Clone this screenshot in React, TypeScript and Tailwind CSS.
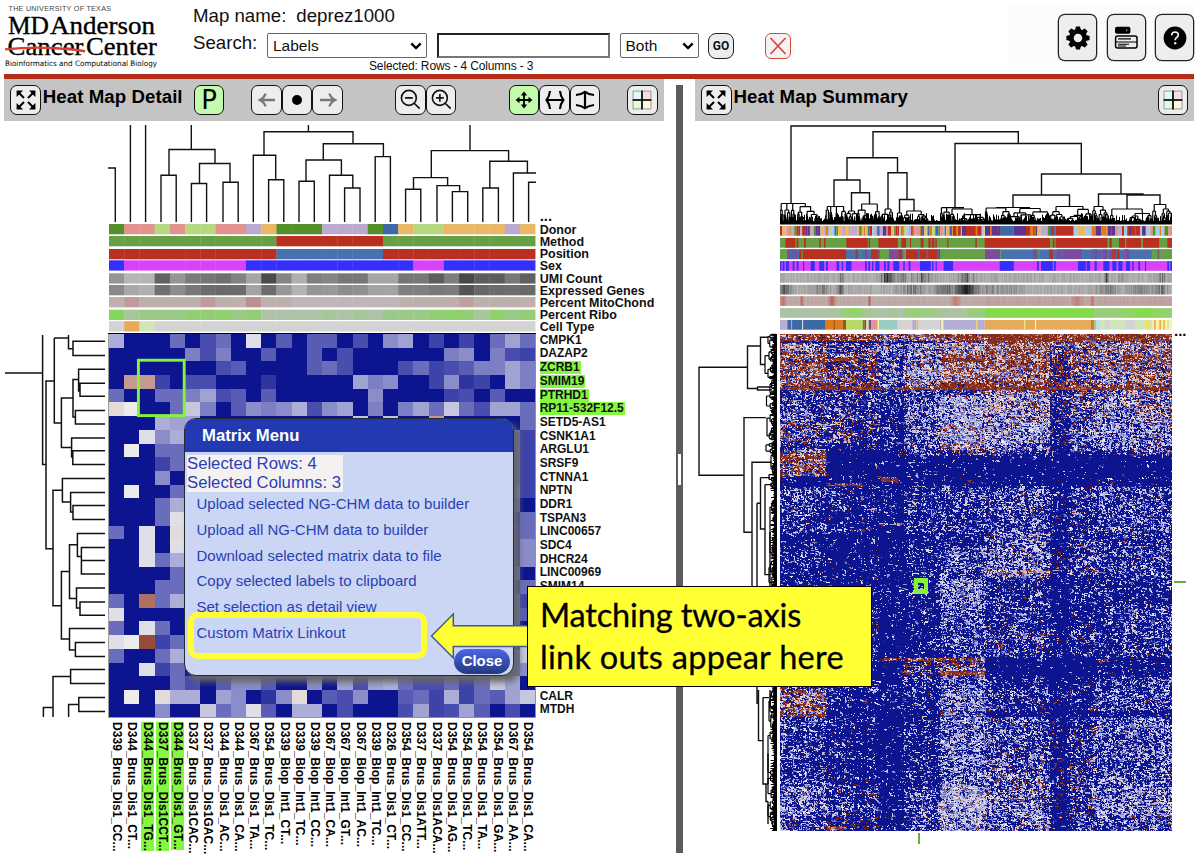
import { useLayoutEffect, useRef } from "react";
import type { ReactNode } from "react";

type Segment = [number, number, string];
type Range = [number, number];

function makeRandom(seed: number) {
  let s = seed;
  return () => {
    s = (s + 0x6d2b79f5) | 0;
    let t = Math.imul(s ^ (s >>> 15), 1 | s);
    t = (t + Math.imul(t ^ (t >>> 7), 61 | t)) ^ t;
    return ((t ^ (t >>> 14)) >>> 0) / 4294967296;
  };
}

/* ---------- detail data ---------- */

const CELL = 15.22;
const ROW = 13.69;

const PALETTE: Record<string, string> = {
  "0": "#0c148f", "1": "#2e35a0", "2": "#3d43a8", "3": "#494eae", "4": "#585cb4",
  "5": "#6a6dbc", "6": "#7c7fc3", "7": "#8a8dca", "8": "#a0a2d2", "9": "#acaed8",
  A: "#c6c6de", B: "#dfdfe8", C: "#ececec", D: "#c39990", E: "#e4dada", F: "#ac7162", G: "#974b3b",
};

const HEAT_ROWS = [
  "900050350B040440307802020585",
  "0000063600400403000000670632",
  "0000000340000453000352346686",
  "0DD2033000100000867002712086",
  "5005568340400000070000230400",
  "EC005A6047679378060685A53885",
  "0009880000000000A0A00D000005",
  "00B7900000000000000000000052",
  "0C05500000000000000000000052",
  "0002500000000000000000000052",
  "0007000000000000000000000052",
  "0C00500000000000000000000062",
  "0005900000000000000000000050",
  "0005B00000000000000000000025",
  "50B0E00000000000000000000035",
  "00B0B00000000000000000000037",
  "00B5900000000000000000000037",
  "0000500000000000000000000050",
  "0005500000000000000000000035",
  "50F5900000000000000000000052",
  "B000000000000000000000000054",
  "50B5000000000000000000000050",
  "BCG250000000000000000000003A",
  "500590000000000000000000005A",
  "00B2500000000000000000000057",
  "0000530477400708389533525A80",
  "0C0E99087017E04370045292548A",
  "000700A57B409903000382384030",
];

const ROW_LABELS = [
  "CMPK1", "DAZAP2", "ZCRB1", "SMIM19", "PTRHD1", "RP11-532F12.5", "SETD5-AS1", "CSNK1A1", "ARGLU1",
  "SRSF9", "CTNNA1", "NPTN", "DDR1", "TSPAN3", "LINC00657", "SDC4", "DHCR24", "LINC00969", "SMIM14",
  "", "", "", "", "", "", "NR4A1", "CALR", "MTDH",
];

const COL_LABELS = [
  "D339_Brus_Dis1_CC...", "D344_Brus_Dis1_CT...", "D344_Brus_Dis1_TG...", "D337_Brus_Dis1CCT...",
  "D344_Brus_Dis1_GT...", "D337_Brus_Dis1CAC...", "D337_Brus_Dis1GAC...", "D344_Brus_Dis1_AC...",
  "D344_Brus_Dis1_CA...", "D367_Brus_Dis1_TA...", "D354_Brus_Dis1_TC...", "D339_Biop_Int1_CT...",
  "D339_Biop_Int1_TC...", "D339_Biop_Int1_CC...", "D367_Biop_Int1_CA...", "D367_Biop_Int1_GT...",
  "D367_Biop_Int1_AC...", "D339_Biop_Int1_TC...", "D326_Brus_Dis1_CT...", "D354_Brus_Dis1_CC...",
  "D337_Brus_Dis1ATT...", "D337_Brus_Dis1ACA...", "D354_Brus_Dis1_AG...", "D354_Brus_Dis1_TC...",
  "D354_Brus_Dis1_TA...", "D354_Brus_Dis1_GA...", "D367_Brus_Dis1_AA...", "D354_Brus_Dis1_CA...",
];

const COVARIATE_NAMES = [
  "Donor", "Method", "Position", "Sex", "UMI Count", "Expressed Genes", "Percent MitoChond", "Percent Ribo", "Cell Type",
];
const BAR_TOPS = [224, 236, 249, 260.3, 273.3, 285, 297, 309.7, 321.2];

const DONOR: Record<string, string> = {
  G: "#55902a", P: "#e0938f", L: "#b6d880", V: "#bbaacf", O: "#e9b768", B: "#3f68a7",
};
const COLORS: Record<string, string> = { g: "#679f44", r: "#b93020", b: "#4a70ae", m: "#d942fb", u: "#342ffb" };

const hex2gray = (s: string) => s.split(" ").map((v) => "#" + v + v + v);

const DETAIL_BARS: string[][] = [
  "GPPLPLLPPVOGGGVVVGBOLLOOOOVO".split("").map((c) => DONOR[c]),
  "gggggggggggrrrrrrrgggggggggg".split("").map((c) => COLORS[c]),
  "rrrrrrrrrrrbbbbbbbrrrrrrrrrr".split("").map((c) => COLORS[c]),
  "ummmmmmmmuuuuuuuuuuummuuuuuu".split("").map((c) => COLORS[c]),
  hex2gray("95 b5 b5 62 95 7a 76 6f 82 a5 4a 85 b0 80 85 77 77 a5 a5 75 77 5d 7d 48 5c 5c 78 60"),
  hex2gray("8a a8 b0 70 8c 78 6c 6a 6c a3 6d 97 b3 95 98 8c 90 a3 a3 7f 7f 78 7c 54 67 6c 6e 6a"),
  "1300003015102222222100040001".split("").map((c) => ["#bdafae", "#bfb0af", "#bdb8b7", "#bf9c99", "#bfa09d", "#bb908d"][+c]),
  "5122233423000010102223431423".split("").map((c) => ["#aec2a8", "#a6c79a", "#9bca88", "#94cd74", "#8fd06c", "#84d65c"][+c]),
  "012".padEnd(28, "0").split("").map((c) => ["#d3d3d3", "#e6ab5a", "#cfe6bd"][+c]),
];

const COL_TREE =
  "M108 168H115.3V222M130.4 125V222M145.6 125V222M191.3 125V149.5M169 175.3V149.5H215V163.5M161 222V175.3H176.2V222M199.5 183.5V163.5H230V182.3M191.4 222V183.5H206.6V222M223 222V182.3H238.2V222" +
  "M308.4 125V131.7M264 155.3V131.7H353V143.7M253.3 222V155.3H275.7V179.7M268.6 222V179.7H283.8V222M323.3 160V143.7H383.4V156.6M306 181.3V160H341.4V175.3M299 222V181.3H314.3V222M329.5 222V175.3H352.8V188M344.6 222V188H360V222M375.2 222V156.6H390.4V222" +
  "M470 125V150.6M431.3 177.6V150.6H508.6V161.3M413.5 189.2V177.6H447.6V185.6M405.6 222V189.2H420.8V222M437 222V185.6H459.6V191.6M452.4 222V191.6H467.7V222M489.8 188V161.3H527.4V173M482.8 222V188H498.4V222M513.4 222V173H536M528.6 222V182.3H536";

const ROW_TREE =
  "M5 373H42.6M42.6 335V464.6H46V381H54.3M54.3 338H68.5M68.5 335V348.7H73M105 341.3H73V355.4H105M54.3 338V423H61.4M73 398H61.4V447.4H71.6M79 379.6H73V417H75.4M105 369.3H78.6V391H80M105 383.3H80V396.3H105M105 410.4H75.4V424H105M105 438H71.6V457H72.8M105 450.8H72.8V464.5H105" +
  "M46 464.6V548.7H53M62.4 490.3H53V605.7H61.4M105 478.6H62.4V502H70.6M105 492.5H70.6V512H73M105 505.6H73V519.5H105M69.5 571.6H61.4V639H69.5M77.4 544.8H69.5V598.5H76.5M105 533.4H77.4V556.5H81.4M105 547.5H81.4V574H105M81.4 560.5H105M105 588H76.5V608H80M105 602H80V615.3H105M105 628.6H69.5V650H75.4M105 642.5H75.4V656.5H105" +
  "M53 717V676.4H70.6M105 669.4H70.6V683.4H105M43.4 717V707.6H53M68.6 717V704.4H78.8M105 697.4H78.8V711.4H105";

/* ---------- summary data ---------- */

function subtree(out: string[], random: () => number, lo: number, hi: number, peak: number, top: number, floor: number, vertical: boolean) {
  const put = (x0: number, y0: number, x1: number, y1: number) =>
    out.push(
      vertical
        ? `M${y0.toFixed(1)} ${x0.toFixed(1)}L${y1.toFixed(1)} ${x1.toFixed(1)}`
        : `M${x0.toFixed(1)} ${y0.toFixed(1)}L${x1.toFixed(1)} ${y1.toFixed(1)}`,
    );
  if (hi - lo < 2 || floor - top < 1.2) {
    put(peak, top, peak, floor);
    return;
  }
  const w = Math.min(peak - lo, hi - peak) * (0.5 + random() * 0.4);
  const a = peak - w;
  const b = peak + w;
  const mid = a + (b - a) * (0.35 + random() * 0.3);
  put(a, top, b, top);
  const down = (from: number) => from + (floor - from) * (0.14 + random() * 0.3);
  const ya = down(top);
  const yb = down(top);
  put(a, top, a, ya);
  put(b, top, b, yb);
  subtree(out, random, lo, mid, a, ya, floor, vertical);
  subtree(out, random, mid, hi, b, yb, floor, vertical);
}

function buildTrees(seed: number, floor: number, vertical: boolean, nodes: number[][]) {
  const out: string[] = [];
  const random = makeRandom(seed);
  nodes.forEach(([lo, hi, peak, top]) => subtree(out, random, lo, hi, peak, top, floor, vertical));
  return out.join("");
}

/* Closely packed leaves: short strokes of uneven length along the edge. */
function buildFringe(seed: number, from: number, to: number, floor: number, min: number, spread: number, vertical: boolean) {
  const random = makeRandom(seed);
  let d = "";
  for (let p = from + 0.5; p < to; p += 1) {
    const k = random();
    const tip = floor - min - k * k * spread;
    d += vertical ? `M${tip.toFixed(1)} ${p}H${floor}` : `M${p} ${tip.toFixed(1)}V${floor}`;
  }
  return d;
}

const SUMMARY_COL_TREE =
  "M791 203.5V126H945.5V131.7M873 157.7V131.7H1018.3V143.5M847 180V157.7H897.5V172.7M834 206.5V180H860V192.7M851.5 211V192.7H869.5V204M888 209V172.7H907V199.5M899.5 213V199.5H914V211M955 207.7V143.5H1081.3V174M1041.5 195V174H1121V194M1013 207.5V195H1069.5V206.5M1098.5 206.5V194H1143V195M1127 209V195H1160V204.5";
const SUMMARY_COL_LEAVES = buildTrees(11, 224, false, [
  [780, 798, 784, 203.5], [791, 826, 799, 203.5], [826, 838, 829, 206.5], [836, 846, 840, 206.5], [846, 857, 851.5, 211],
  [857, 880, 869.5, 204], [880, 893, 888, 209], [893, 903, 899.5, 213], [903, 940, 914, 211], [940, 950, 944, 207.7],
  [950, 985, 962, 209], [985, 1010, 996, 208], [1005, 1050, 1030, 208.5], [1050, 1092, 1069.5, 206.5],
  [1092, 1110, 1098.5, 206.5], [1110, 1152, 1127, 209], [1152, 1172, 1160, 204.5],
]) + "M784 203.5H799M829 206.5H840M944 207.7H964M996 207.5H1030";
const SUMMARY_COL_FRINGE = buildFringe(3, 780, 1172, 224.5, 3.5, 8, false);

const SUMMARY_ROW_TREE =
  "M747.5 367.3H699V475.3H744M760.5 346H747.5V388.5H757.5M768 337.3H760.5V364.5H765M757.5 386.5V390H772M757.5 387H772M766 417.6H744V532.3H752M772 462.3H752V640M757 503.3V703.4H758.5M760.5 503.3H757M760.5 477.6V529H765M760.5 477.6H770M765 484.6V574.6H770M765 484.6H772M758.5 690V740.6H763M763 697.6V784H768M763 697.6H769M768 753.5V784M768 801.5V824M763 784H766V801.5H768M752 600H757M770 532V640M770 690V712";
const SUMMARY_ROW_LEAVES = buildTrees(29, 776, true, [
  [334, 349, 340, 768], [349, 379, 364.5, 765], [379, 394, 388.5, 770], [394, 414, 401, 766.5],
  [414, 440, 427, 767], [440, 454, 448, 766], [454, 474, 462, 771], [474, 482, 477, 769],
  [482, 500, 485, 771], [500, 560, 530, 770], [560, 600, 575, 769], [600, 690, 640, 769],
  [690, 730, 711, 769], [730, 775, 754, 768], [775, 800, 786, 768], [800, 831, 811, 768],
]);
const SUMMARY_ROW_FRINGE = buildFringe(8, 334, 831, 777, 3, 4, true);

const SUMMARY_TOPS = [226, 238, 249.4, 261.1, 273, 284.8, 296.2, 308.1, 320];

const METHOD_RED: Range[] = [
  [286, 316], [320, 325], [342, 347], [388, 392], [402, 406], [469, 533], [536, 540], [565, 623], [634, 648],
  [660, 663], [692, 700], [715, 722], [725, 733], [736, 740], [772, 775], [856, 860], [884, 1080], [1088, 1093],
  [1097, 1252], [1258, 1265], [1287, 1305], [1309, 1353], [1359, 1407], [1432, 1446],
];
const SEX_BLUE: Range[] = [
  [270, 274], [278, 283], [288, 296], [308, 313], [320, 325], [339, 342], [362, 374], [388, 402], [408, 413],
  [440, 447], [455, 459], [468, 484], [525, 530], [535, 540], [546, 550], [556, 568], [582, 587], [592, 598],
  [610, 627], [640, 644], [656, 661], [690, 722], [726, 730], [737, 740], [761, 789], [929, 971], [1041, 1046],
  [1053, 1088], [1092, 1097], [1164, 1187], [1190, 1200], [1214, 1220], [1240, 1258], [1267, 1279], [1285, 1297],
  [1308, 1320], [1327, 1331], [1345, 1350], [1365, 1368], [1432, 1437], [1441, 1446],
];
const POSITION: Segment[] = [
  [270, 292, "#679f44"], [292, 322, "#7d4b9b"], [300, 304, "#4a70ae"], [311, 314, "#4a70ae"], [322, 325, "#4a70ae"],
  [327, 468, "#b93020"], [335, 338, "#679f44"], [498, 503, "#b93020"],
  [510, 514, "#679f44"], [543, 565, "#b93020"], [570, 597, "#679f44"], [597, 625, "#7d4b9b"], [625, 636, "#b93020"],
  [640, 648, "#679f44"], [648, 750, "#b93020"], [684, 688, "#4a70ae"], [710, 714, "#4a70ae"], [742, 746, "#4a70ae"],
  [750, 885, "#679f44"], [885, 930, "#7d4b9b"], [930, 933, "#679f44"], [1030, 1040, "#7d4b9b"], [1045, 1048, "#679f44"],
  [1078, 1088, "#b93020"], [1100, 1175, "#7d4b9b"], [1116, 1119, "#4a70ae"], [1210, 1222, "#7d4b9b"], [1240, 1250, "#7d4b9b"],
  [1265, 1288, "#b93020"], [1302, 1313, "#7d4b9b"], [1385, 1446, "#679f44"], [1403, 1407, "#7d4b9b"],
];
const CELL_TYPE: Segment[] = [
  [270, 292, "#b8add3"], [292, 407, "#3f68a7"], [303, 306, "#8ab6d5"], [336, 339, "#d9d9e6"], [407, 458, "#e07b1c"],
  [431, 434, "#9a5420"], [458, 468, "#9a5420"], [468, 518, "#b9d962"], [518, 524, "#55902a"], [524, 529, "#b93020"],
  [529, 536, "#d6e7a6"], [536, 543, "#7d4b9b"], [543, 563, "#e29591"], [563, 567, "#f3f0a0"], [567, 623, "#9accc1"],
  [623, 750, "#d4d4d4"], [667, 678, "#bbaacf"], [680, 684, "#e9b768"], [750, 858, "#b3aed2"], [753, 760, "#f3f0a0"],
  [858, 862, "#e8d46a"], [862, 884, "#b3aed2"], [884, 1208, "#e6ab5a"], [1002, 1006, "#efe37d"], [1035, 1038, "#fff7b0"],
  [1203, 1212, "#e07b1c"], [1212, 1218, "#9ccc9a"], [1218, 1230, "#c6d9ea"], [1230, 1245, "#cfe6bd"],
  [1245, 1260, "#d4d4d4"], [1260, 1305, "#cfe6bd"], [1305, 1335, "#d4d4d4"], [1335, 1368, "#cfe6bd"],
  [1368, 1380, "#f0e05d"], [1380, 1388, "#cfe6bd"], [1388, 1446, "#f8f59a"], [1392, 1397, "#e6ab5a"],
  [1408, 1413, "#e6ab5a"], [1420, 1424, "#e6ab5a"], [1432, 1436, "#d4d4d4"],
];

const toX = (v: number) => 780 + (v - 270) / 3;
const near = (x: number, c: number, w: number) => Math.max(0, 1 - Math.abs(x - c) / w);

function buildSummaryBars(): Segment[][] {
  const random = makeRandom(77);
  const donorPool = ["#b93020", "#e07b1c", "#5c348f", "#3f68a7", "#e9b768", "#bbaacf", "#55902a", "#e0938f", "#a9c9e3", "#b6d880"];
  const donor: Segment[] = [];
  for (let x = 270; x < 885; ) {
    const w = 3 + random() * 8;
    donor.push([x, Math.min(x + w, 885), donorPool[Math.floor(random() * 10)]]);
    x += w;
  }
  donor.push(
    [788, 812, "#b93020"], [798, 804, "#e07b1c"], [816, 828, "#5c348f"], [828, 857, "#b93020"], [857, 862, "#e07b1c"], [862, 874, "#b93020"],
    [885, 930, "#5c348f"], [900, 905, "#e07b1c"], [921, 925, "#b93020"], [930, 971, "#3f68a7"], [971, 1008, "#5c348f"],
    [1008, 1020, "#b93020"], [1020, 1036, "#e07b1c"], [1030, 1033, "#b93020"], [1036, 1042, "#5c348f"],
    [1042, 1052, "#e9b768"], [1052, 1073, "#bbaacf"], [1073, 1080, "#55902a"], [1080, 1097, "#3f68a7"], [1085, 1089, "#b93020"],
    [1097, 1151, "#b93020"], [1151, 1163, "#a9c9e3"], [1163, 1187, "#e9b768"], [1187, 1215, "#a9c9e3"],
  );
  for (let x = 1205; x < 1446; ) {
    const w = 3 + random() * 14;
    donor.push([x, Math.min(x + w, 1446), donorPool[Math.floor(random() * 9)]]);
    x += w;
  }
  const method: Segment[] = [[270, 1446, "#679f44"], ...METHOD_RED.map(([a, b]): Segment => [a, b, "#b93020"])];
  const position: Segment[] = [[270, 1446, "#4a70ae"], ...POSITION];
  for (let i = 0; i < 20; i++) {
    const x = [480, 1180, 1225, 1300][i % 4] + random() * 60;
    position.push([x, x + 3, random() > 0.5 ? "#7d4b9b" : "#4a70ae"]);
  }
  const sex: Segment[] = [[270, 1446, "#d942fb"], ...SEX_BLUE.map(([a, b]): Segment => [a, b, "#342ffb"])];
  const umi: Segment[] = [];
  const genes: Segment[] = [];
  const mito: Segment[] = [];
  const ribo: Segment[] = [];
  for (let x = 270; x < 1446; x += 3) {
    const n = random();
    const u =
      184 - n * 24 - 150 * near(x, 590, 34) * random() - 110 * near(x, 700, 46) * random() - 110 * near(x, 828, 34) * random() -
      90 * near(x, 450, 16) * random() - 100 * near(x, 1248, 8) - 90 * near(x, 1415, 14) * random() - 60 * near(x, 640, 40) * random() - 60 * near(x, 1292, 10) * random();
    const g =
      184 - random() * 26 - 90 * near(x, 282, 30) * (0.5 + random() / 2) - 80 * near(x, 395, 30) * random() - 75 * near(x, 660, 60) * random() -
      85 * near(x, 770, 60) * (0.4 + random() / 2) - 130 * near(x, 828, 42) - 50 * near(x, 920, 120) * random() - 80 * near(x, 1250, 45) * random() -
      90 * near(x, 1410, 30) * random() - 80 * near(x, 450, 14) - 35 * near(x, 1350, 60);
    const m =
      0.15 * random() + 0.7 * near(x, 278, 12) + 0.9 * near(x, 334, 7) + 0.95 * near(x, 424, 14) + 1 * near(x, 537, 6) +
      0.5 * near(x, 795, 20) + 0.45 * near(x, 1160, 18) + 0.7 * near(x, 1205, 6) + (x < 885 ? 0 : 0.08);
    const r = Math.min(
      1,
      0.15 * random() + 0.7 * near(x, 490, 50) + 0.45 * near(x, 680, 90) + (x > 830 ? 0.4 : 0) +
        (x > 884 && x < 1210 ? 0.5 : 0) + 0.5 * near(x, 1360, 90) - 0.5 * near(x, 632, 8),
    );
    const gray = (v: number) => {
      const k = Math.round(Math.max(25, v));
      return `rgb(${k} ${k} ${k})`;
    };
    umi.push([x, x + 3, gray(u)]);
    genes.push([x, x + 3, gray(g)]);
    mito.push([x, x + 3, `rgb(${190 + Math.round(m * 5)} ${Math.round(176 - m * 85)} ${Math.round(174 - m * 90)})`]);
    ribo.push([x, x + 3, `rgb(${Math.round(176 - r * 46)} ${Math.round(192 + r * 28)} ${Math.round(170 - r * 98)})`]);
  }
  return [donor, method, position, sex, umi, genes, mito, ribo, CELL_TYPE];
}
const SUMMARY_BARS = buildSummaryBars();

/* Bands hold, for each column group, the share of lowest-value and highest-value pixels. */
const GROUPS = [46, 99, 124, 160, 205, 270, 316, 343, 392];
type Band = { end: number; low: number[]; high: number[] };
const BANDS: Band[] = [
  { end: 7, low: [12, 8, 14, 8, 4, 1, 2, 3, 3], high: [70, 72, 48, 56, 84, 97, 88, 80, 86] },
  { end: 9, low: [90, 92, 85, 85, 80, 8, 25, 60, 16], high: [2, 2, 1, 1, 5, 72, 50, 8, 50] },
  { end: 20, low: [22, 45, 32, 24, 14, 4, 24, 12, 7], high: [26, 18, 8, 6, 20, 46, 36, 30, 40] },
  { end: 28, low: [20, 45, 50, 30, 8, 5, 45, 20, 10], high: [46, 32, 8, 10, 56, 50, 32, 30, 48] },
  { end: 48, low: [12, 34, 44, 20, 5, 12, 50, 18, 14], high: [54, 40, 5, 7, 40, 46, 32, 28, 38] },
  { end: 53, low: [10, 36, 44, 20, 4, 8, 45, 16, 9], high: [66, 38, 6, 14, 78, 60, 34, 36, 48] },
  { end: 56, low: [0, 0, 3, 1, 0, 0, 1, 1, 0], high: [99, 98, 92, 94, 98, 99, 96, 96, 98] },
  { end: 61, low: [62, 68, 70, 68, 74, 20, 54, 40, 30], high: [5, 8, 4, 4, 3, 32, 24, 8, 26] },
  { end: 88, low: [52, 60, 72, 44, 16, 20, 66, 30, 22], high: [6, 9, 1, 1, 3, 13, 13, 6, 15] },
  { end: 108, low: [38, 60, 74, 44, 10, 22, 74, 32, 26], high: [22, 15, 2, 2, 10, 6, 10, 3, 7] },
  { end: 116, low: [70, 84, 80, 60, 26, 40, 80, 46, 44], high: [8, 5, 1, 3, 18, 6, 6, 3, 6] },
  { end: 121, low: [26, 94, 90, 66, 55, 55, 86, 70, 60], high: [34, 3, 6, 12, 14, 8, 6, 5, 10] },
  { end: 142, low: [20, 96, 94, 93, 95, 95, 97, 97, 97], high: [42, 1, 0, 0, 0, 0, 0, 0, 0] },
  { end: 152, low: [93, 92, 93, 90, 92, 93, 95, 88, 92], high: [1, 2, 1, 1, 1, 1, 1, 3, 2] },
  { end: 200, low: [64, 82, 86, 70, 66, 56, 84, 60, 58], high: [1, 2, 0, 0, 0, 2, 3, 0, 1] },
  { end: 212, low: [93, 94, 92, 86, 84, 48, 86, 70, 64], high: [0, 0, 0, 0, 0, 4, 4, 0, 1] },
  { end: 243, low: [78, 88, 90, 76, 62, 42, 82, 68, 60], high: [0, 2, 0, 0, 0, 6, 6, 0, 2] },
  { end: 270, low: [86, 90, 90, 84, 34, 74, 90, 80, 82], high: [0, 1, 0, 0, 0, 2, 2, 0, 1] },
  { end: 295, low: [80, 84, 92, 86, 54, 72, 90, 78, 62], high: [0, 3, 0, 0, 0, 2, 3, 0, 1] },
  { end: 323, low: [80, 84, 94, 88, 68, 60, 86, 76, 60], high: [0, 2, 0, 0, 0, 4, 3, 0, 1] },
  { end: 343, low: [90, 94, 92, 66, 36, 94, 97, 86, 88], high: [0, 0, 3, 16, 28, 0, 0, 5, 2] },
  { end: 356, low: [50, 80, 90, 74, 50, 80, 93, 62, 58], high: [8, 1, 0, 0, 1, 1, 1, 0, 1] },
  { end: 376, low: [18, 82, 90, 78, 34, 70, 86, 62, 56], high: [28, 1, 0, 1, 3, 2, 4, 0, 2] },
  { end: 383, low: [42, 93, 92, 88, 36, 90, 95, 88, 80], high: [24, 1, 0, 1, 10, 2, 1, 0, 2] },
  { end: 425, low: [64, 80, 92, 80, 40, 54, 84, 52, 50], high: [0, 2, 0, 0, 1, 4, 6, 0, 1] },
  { end: 452, low: [72, 84, 92, 76, 40, 40, 86, 52, 54], high: [0, 2, 0, 0, 0, 9, 9, 0, 2] },
  { end: 482, low: [38, 68, 88, 58, 11, 38, 84, 40, 34], high: [3, 3, 0, 0, 7, 7, 9, 0, 3] },
  { end: 497, low: [56, 76, 88, 62, 18, 44, 84, 54, 52], high: [5, 12, 1, 1, 8, 5, 6, 0, 3] },
];
/* x, y, width, height, share of highest-value pixels */
const PATCHES = [
  [0, 28, 46, 2, 0.85], [46, 24, 34, 3, 0.8], [160, 24, 45, 3, 0.95], [343, 21, 49, 3, 0.85], [160, 48, 45, 5, 0.9],
  [0, 122, 46, 3, 0.8], [101, 143, 17, 5, 0.85], [46, 149, 36, 3, 0.85], [99, 324, 106, 3, 0.6], [160, 337, 45, 4, 0.85],
  [120, 336, 12, 3, 0.6], [0, 380, 46, 2, 0.75], [0, 375, 46, 2, 0.4], [46, 492, 19, 4, 0.85], [316, 325, 12, 2, 0.7],
  [99, 189, 25, 2, 0.3], [205, 236, 65, 3, 0.2],
];

function paintSummary(canvas: HTMLCanvasElement) {
  const ctx = canvas.getContext("2d");
  if (!ctx) return;
  const W = 392;
  const H = 497;
  const img = ctx.createImageData(W, H);
  const random = makeRandom(5);
  const colBias = Array.from({ length: W }, () => (random() - 0.5) * 28);
  for (let x = 82; x < 86; x++) colBias[x] += 15;
  for (let x = 117; x < 124; x++) colBias[x] += 16;
  for (let x = 282; x < 286; x++) colBias[x] += 8;
  const edge = [12, 20, 143];
  const brown = [130, 36, 18];
  const mix = (a: number[], b: number[], t: number) => a.map((v, i) => v + (b[i] - v) * t);
  let band = 0;
  let above: number[][] = [];
  for (let y = 0; y < H; y++) {
    while (y >= BANDS[band].end) band++;
    const { low: lows, high: highs } = BANDS[band];
    const rowBias = (random() - 0.5) * 14;
    const line: number[][] = [];
    for (let x = 0; x < W; x++) {
      const g = GROUPS.findIndex((e) => x < e);
      let low = lows[g];
      let high = highs[g];
      if (g === 6 && x >= 290) {
        low = lows[5] * 0.55 + lows[6] * 0.45;
        high = (highs[5] + highs[6]) / 2;
      }
      if (low < 88) low += (colBias[x] + rowBias) * (high > 85 ? 0 : 1);
      if (high < 90 && high > 20) high += rowBias * 2;
      PATCHES.forEach(([px, py, pw, ph, share]) => {
        if (x >= px && x < px + pw && y >= py && y < py + ph) {
          high = share * 100;
          low = 6;
        }
      });
      const r = random() * 100;
      const reuse = random();
      let c: number[];
      if (x > 0 && reuse < 0.28) c = line[x - 1];
      else if (y > 0 && reuse < 0.44) c = above[x];
      else if (r < high) c = mix(brown, [205, 160, 150], random() < 0.75 ? random() * 0.15 : random());
      else if (r < high + low) c = edge;
      else {
        const k = random();
        if (high > 12 && k < 0.35) c = mix([215, 170, 158], [236, 232, 232], random());
        else if (k < 0.45) c = mix([236, 234, 238], [170, 172, 218], random());
        else if (k < 0.52 && g !== 2) c = [222, 196, 190];
        else c = mix([60, 66, 168], [190, 192, 226], random());
      }
      line.push(c);
      const i = (y * W + x) * 4;
      img.data[i] = c[0];
      img.data[i + 1] = c[1];
      img.data[i + 2] = c[2];
      img.data[i + 3] = 255;
    }
    above = line;
  }
  ctx.putImageData(img, 0, 0);
}

function SummaryHeatMap() {
  const ref = useRef<HTMLCanvasElement>(null);
  useLayoutEffect(() => {
    if (ref.current) paintSummary(ref.current);
  }, []);
  return <canvas ref={ref} width={392} height={497} className="block h-[497px] w-[392px]" />;
}

/* ---------- small pieces ---------- */

function ToolButton({ children, active = false }: { children: ReactNode; active?: boolean }) {
  return (
    <button
      className={`flex h-[30.5px] w-[30.5px] shrink-0 items-center justify-center rounded-[7px] border border-[#111] ${active ? "bg-[#c3fbad]" : "bg-[#ededed]"}`}
    >
      {children}
    </button>
  );
}

function ExpandIcon() {
  return (
    <svg width="20" height="20" viewBox="0 0 20 20" className="shrink-0">
      <path d="M3 3L8 8M17 3L12 8M3 17L8 12M17 17L12 12" stroke="#000" strokeWidth="2" />
      <path d="M0.6 0.6H7L5 2.6L2.6 5L0.6 7ZM19.4 0.6H13L15 2.6L17.4 5L19.4 7ZM0.6 19.4H7L5 17.4L2.6 15L0.6 13ZM19.4 19.4H13L15 17.4L17.4 15L19.4 13Z" />
    </svg>
  );
}

function GridIcon() {
  return (
    <svg width="20" height="20" viewBox="0 0 20 20">
      <rect x="0.7" y="0.7" width="18.6" height="18.6" fill="#777" />
      <path d="M1.4 1.4H9V9H1.4Z" fill="#dffafa" />
      <path d="M11 1.4H18.6V9H11Z" fill="#f7dfe0" />
      <path d="M1.4 11H9V18.6H1.4Z" fill="#e2fae0" />
      <path d="M11 11H18.6V18.6H11Z" fill="#fbf8dc" />
      <path d="M10 0.5V19.5M0.5 10H19.5" stroke="#111" strokeWidth="1.6" />
    </svg>
  );
}

function ArrowIcon({ flip = false }: { flip?: boolean }) {
  return (
    <svg width="18" height="18" viewBox="0 0 18 18" className={flip ? "-scale-x-100" : ""}>
      <path d="M17 9H2M7.6 2.6Q6 7.2 1.6 9Q6 10.8 7.6 15.4" fill="none" stroke="#787878" strokeWidth="2.3" />
    </svg>
  );
}

function ZoomIcon({ plus = false }: { plus?: boolean }) {
  return (
    <svg width="21" height="21" viewBox="0 0 22 22" fill="none" stroke="#111" strokeWidth="1.7">
      <circle cx="9.3" cy="9.3" r="7.8" />
      <path d="M14.9 14.9L20.6 20.6M5.2 9.3H13.4" />
      {plus && <path d="M9.3 5.2V13.4" />}
    </svg>
  );
}

function Chevron() {
  return (
    <svg width="12" height="8" viewBox="0 0 12 8">
      <path d="M1.3 1.4L6 6.1L10.7 1.4" fill="none" stroke="#000" strokeWidth="2.4" />
    </svg>
  );
}

function Logo() {
  return (
    <svg width="164" height="72" viewBox="0 0 164 72" className="shrink-0">
      <text x="8.5" y="11.2" textLength="102.5" className="fill-[#444] font-['Liberation_Sans'] text-[7.2px]">THE UNIVERSITY OF TEXAS</text>
      <g className="fill-black font-['Liberation_Serif'] text-[26px]" stroke="#000" strokeWidth="0.35">
        <text x="8" y="34" textLength="41" lengthAdjust="spacingAndGlyphs">MD</text>
        <text x="50" y="34" textLength="105" lengthAdjust="spacingAndGlyphs">Anderson</text>
        <text x="7.5" y="55.3" textLength="76" lengthAdjust="spacingAndGlyphs">Cancer</text>
        <text x="86" y="55.3" textLength="71" lengthAdjust="spacingAndGlyphs">Center</text>
      </g>
      <path d="M5 49.4Q30 46.6 56 48.2T85 51.6" fill="none" stroke="#d8402c" strokeWidth="2.4" />
      <text x="5" y="65.6" textLength="152" lengthAdjust="spacingAndGlyphs" className="fill-black font-['DejaVu_Sans'] text-[7.4px]">Bioinformatics and Computational Biology</text>
    </svg>
  );
}

function GearIcon() {
  const teeth = Array.from({ length: 8 }, (_, i) => i * 45);
  return (
    <svg width="24" height="24" viewBox="-12 -12 24 24">
      {teeth.map((a) => (
        <path key={a} d="M-3.2 -7L-2 -11.6H2L3.2 -7Z" transform={`rotate(${a})`} />
      ))}
      <circle r="6.6" fill="none" stroke="#000" strokeWidth="4.6" />
    </svg>
  );
}

function PanelIcon() {
  return (
    <svg width="24" height="24" viewBox="0 0 24 24">
      <rect x="1" y="0.8" width="15.4" height="7" rx="1.8" />
      <path d="M12 3.2L13.4 4.4L12 5.4" stroke="#ddd" strokeWidth="0.6" fill="none" />
      <rect x="1.6" y="10" width="21.4" height="12" rx="2" fill="#ededed" stroke="#000" strokeWidth="1.5" />
      <path d="M2 16H23M4 12.9H17M4 18.2H15M4 20H12" stroke="#000" strokeWidth="1.1" />
    </svg>
  );
}

function HeaderButton({ children }: { children: ReactNode }) {
  return (
    <button className="flex h-[47px] w-[39px] shrink-0 items-center justify-center rounded-[7px] border border-[#222] bg-[#ededed] shadow-[0_0_0_0.3px_#333]">{children}</button>
  );
}

/* ---------- page parts ---------- */

function Header() {
  return (
    <header className="flex h-[74px] shrink-0 bg-white">
      <Logo />
      <div className="ml-[29px] w-[620px] pt-[5px] text-[18.66px] leading-[22px] text-[#111]">
        <div className="flex gap-[10px]">
          <span>Map name:</span>
          <span>deprez1000</span>
        </div>
        <div className="mt-[6px] flex h-[25px] text-[15.5px]">
          <span className="-mt-px w-[74px] text-[18.66px]">Search:</span>
          <div className="flex h-[25px] w-[160px] items-center justify-between rounded-[2px] border border-[#666] bg-white pr-[4px] pl-[5px]">
            <span>Labels</span>
            <Chevron />
          </div>
          <div className="ml-[9.5px] h-[25px] w-[173px] border-2 border-t-[#222] border-r-[#777] border-b-[#777] border-l-[#222]" />
          <div className="ml-[10px] flex h-[25px] w-[79.5px] items-center justify-between rounded-[2px] border border-[#666] bg-white pr-[4px] pl-[5px]">
            <span>Both</span>
            <Chevron />
          </div>
          <button className="ml-[9px] flex h-[26px] w-[26px] items-center justify-center rounded-[8px] border border-[#222] bg-[#ededed] font-['Roboto'] text-[12px] font-bold">GO</button>
          <button className="ml-[31px] flex h-[26px] w-[26px] items-center justify-center rounded-[6px] border border-[#de4a38] bg-[#f4f2f2]">
            <svg width="18" height="18" viewBox="0 0 18 18">
              <path d="M1.5 1L16.5 17M16.5 1L1.5 17" stroke="#d8402c" strokeWidth="1.6" />
            </svg>
          </button>
        </div>
        <div className="ml-[176px] pt-px text-[12px] leading-[15px] tracking-[-0.15px]">Selected: Rows - 4 Columns - 3</div>
      </div>
      <div className="mt-[6px] mr-[7px] ml-auto flex h-[59px] w-[186px] justify-end gap-[9.5px] bg-[#fcfcfc] pt-[8px]">
        <HeaderButton><GearIcon /></HeaderButton>
        <HeaderButton><PanelIcon /></HeaderButton>
        <HeaderButton>
          <svg width="24" height="24" viewBox="0 0 24 24">
            <circle cx="12" cy="12" r="11.4" />
            <path d="M8.7 9.2Q8.9 6 12.1 6Q15.3 6.1 15.3 8.9Q15.2 10.7 13.4 11.7Q12.2 12.4 12.2 14.2" fill="none" stroke="#eee" strokeWidth="1.7" />
            <circle cx="12.2" cy="17.2" r="1.2" fill="#eee" />
          </svg>
        </HeaderButton>
      </div>
    </header>
  );
}

function DetailToolbar() {
  return (
    <div className="flex h-[42px] shrink-0 bg-[#c4c4c4] pt-[5.7px] pr-[6.5px] pl-[6.3px]">
      <ToolButton><ExpandIcon /></ToolButton>
      <span className="ml-[2px] w-[151px] text-[18.66px] leading-[24px] font-bold tracking-[0.06px] text-black">Heat Map Detail</span>
      <ToolButton active>
        <span className="font-['DejaVu_Sans'] text-[26px] leading-none">P</span>
      </ToolButton>
      <div className="ml-[27px] flex">
        <ToolButton><ArrowIcon /></ToolButton>
        <ToolButton><span className="h-[10px] w-[10px] rounded-full bg-black" /></ToolButton>
        <ToolButton><ArrowIcon flip /></ToolButton>
      </div>
      <div className="ml-[52.5px] flex">
        <ToolButton><ZoomIcon /></ToolButton>
        <ToolButton><ZoomIcon plus /></ToolButton>
      </div>
      <div className="ml-[52.5px] flex">
        <ToolButton active>
          <svg width="18" height="18" viewBox="0 0 20 20">
            <path d="M10 3V17M3 10H17" stroke="#000" strokeWidth="2" />
            <path d="M10 0.6L13.6 5H6.4ZM10 19.4L13.6 15H6.4ZM0.6 10L5 6.4V13.6ZM19.4 10L15 6.4V13.6Z" />
          </svg>
        </ToolButton>
        <ToolButton>
          <svg width="20" height="20" viewBox="0 0 20 20" fill="none" stroke="#000" strokeWidth="2.2">
            <path d="M5 1Q4.4 6.4 1.6 10Q4.4 13.6 5 19M15 1Q15.6 6.4 18.4 10Q15.6 13.6 15 19M2 10H18" />
          </svg>
        </ToolButton>
        <ToolButton>
          <svg width="20" height="20" viewBox="0 0 20 20" fill="none" stroke="#000" strokeWidth="2.2">
            <path d="M1 5Q6.4 4.4 10 1.8Q13.6 4.4 19 5M1 15Q6.4 15.6 10 18.2Q13.6 15.6 19 15M10 2V18" />
          </svg>
        </ToolButton>
      </div>
      <div className="ml-auto"><ToolButton><GridIcon /></ToolButton></div>
    </div>
  );
}

function DetailPanel() {
  return (
    <section className="flex w-[660px] flex-col">
      <DetailToolbar />
      <div className="flex">
        <div className="w-[104px] pt-[212px]">
          <svg width="104" height="386" viewBox="4 333 104 386">
            <path d={ROW_TREE} fill="none" stroke="#111" strokeWidth="1.5" />
          </svg>
        </div>
        <div className="flex w-[428px] flex-col">
          <svg width="428" height="102" viewBox="108 121 428 102">
            <path d={COL_TREE} fill="none" stroke="#111" strokeWidth="1.4" />
          </svg>
          <svg width="428" height="110" viewBox="108 223 428 110">
            {DETAIL_BARS.map((bar, r) =>
              bar.map((fill, i) => <rect key={`${r}-${i}`} x={109 + i * CELL} y={BAR_TOPS[r]} width={CELL + 0.3} height="10.3" fill={fill} />),
            )}
          </svg>
          <svg width="428" height="386" viewBox="108 333 428 386">
            <rect x="108.3" y="333" width="427.5" height="384.8" fill="#777" />
            <path d="M108 333.4H536" stroke="#000" strokeWidth="1.2" />
            <g shapeRendering="crispEdges">
              {HEAT_ROWS.map((row, r) =>
                row.split("").map((c, i) => <rect key={`${r}-${i}`} x={109 + i * CELL} y={334 + r * ROW} width={CELL} height={ROW} fill={PALETTE[c]} />),
              )}
            </g>
            <rect x="138.4" y="360.2" width="45.8" height="55.4" fill="none" stroke="#82f53a" strokeWidth="2.9" />
          </svg>
          <div className="ml-px flex h-[140px] pt-[3px]">
            {COL_LABELS.map((label, i) => (
              <div key={i} className="flex w-[15.22px] shrink-0 justify-center">
                <span
                  className={`h-fit w-[13px] text-[12px] leading-[13px] font-bold tracking-[0.05px] whitespace-nowrap text-black [writing-mode:vertical-rl] ${i >= 2 && i <= 4 ? "bg-[#84f740]" : ""}`}
                >
                  {label}
                </span>
              </div>
            ))}
          </div>
        </div>
        <div className="w-[128px] pt-[88px] pl-[3.7px] text-[12px] font-bold whitespace-nowrap text-[#111]">
          <div className="h-[15px] text-[15px] leading-[14px]">...</div>
          <div className="text-[12.5px] leading-[12.15px]">
            {COVARIATE_NAMES.map((n) => <div key={n}>{n}</div>)}
          </div>
          <div>
            {ROW_LABELS.map((n, i) => (
              <div key={i} className="flex h-[13.7px] items-center">
                <span className={`leading-[13px] ${i >= 2 && i <= 5 ? "bg-[#84f740] pr-px" : ""}`}>{n}</span>
              </div>
            ))}
          </div>
        </div>
      </div>
    </section>
  );
}

function SummaryPanel() {
  return (
    <section className="flex w-[499px] flex-col">
      <div className="flex h-[42px] shrink-0 justify-between bg-[#c4c4c4] pt-[5.5px] pr-[6px] pl-[6px]">
        <div className="flex">
          <ToolButton><ExpandIcon /></ToolButton>
          <span className="ml-[2px] text-[18.66px] leading-[24px] font-bold tracking-[0.08px] text-black">Heat Map Summary</span>
        </div>
        <ToolButton><GridIcon /></ToolButton>
      </div>
      <div className="flex">
        <div className="w-[85px] pt-[212px]">
          <svg width="85" height="500" viewBox="695 333 85 500">
            <path d={SUMMARY_ROW_TREE} fill="none" stroke="#111" strokeWidth="1.4" />
            <path d={SUMMARY_ROW_LEAVES} fill="none" stroke="#000" strokeWidth="1.2" />
            <path d={SUMMARY_ROW_FRINGE} fill="none" stroke="#000" strokeWidth="1" />
          </svg>
        </div>
        <div className="flex w-[392px] flex-col">
          <svg width="392" height="104" viewBox="780 121 392 104">
            <path d={SUMMARY_COL_TREE} fill="none" stroke="#111" strokeWidth="1.4" />
            <path d={SUMMARY_COL_LEAVES} fill="none" stroke="#000" strokeWidth="1.2" />
            <path d={SUMMARY_COL_FRINGE} fill="none" stroke="#000" strokeWidth="1" />
          </svg>
          <svg width="392" height="109" viewBox="780 225 392 109">
            {SUMMARY_BARS.map((bar, r) =>
              bar.map(([a, b, fill], i) => (
                <rect key={`${r}-${i}`} x={toX(a)} y={SUMMARY_TOPS[r]} width={(b - a) / 3 + 0.1} height="9.7" fill={fill} />
              )),
            )}
          </svg>
          <div className="relative">
            <SummaryHeatMap />
            <div className="absolute top-[244px] left-[134px] h-[16px] w-[14px] border-x-[4.5px] border-y-[5px] border-[#82f53a]" />
          </div>
          <div className="mt-[2px] ml-[138px] h-[11px] w-[1.5px] bg-[#5fb335]" />
        </div>
        <div className="pt-[203px] pl-[2px]">
          <div className="text-[15px] leading-[14px] font-bold">...</div>
          <div className="mt-[243px] h-[2px] w-[12px] bg-[#5fb335]" />
        </div>
      </div>
    </section>
  );
}

const MENU_ITEMS = [
  "Upload selected NG-CHM data to builder", "Upload all NG-CHM data to builder", "Download selected matrix data to file",
  "Copy selected labels to clipboard", "Set selection as detail view", "Custom Matrix Linkout",
];

function MatrixMenu() {
  return (
    <div className="absolute top-[418px] left-[184px] h-[257.5px] w-[330px] overflow-visible rounded-[12px] border-[1.5px] border-[#222b33] bg-[#cbd6f4] text-[#2940b5] shadow-[5px_6px_6px_#666]">
      <div className="flex h-[33px] items-center rounded-t-[10px] bg-[#2239b2] pt-px pl-[17px] text-[16.7px] font-bold text-white">Matrix Menu</div>
      <div className="mt-[3px] ml-[2px] w-[156px] bg-[#f5f1f0] text-[16.7px] leading-[18.5px]">
        <div>Selected Rows: 4</div>
        <div className="whitespace-nowrap">Selected Columns: 3</div>
      </div>
      <ul className="-mt-px pl-[11.5px] text-[15px] leading-[25.75px]">
        {MENU_ITEMS.map((t) => <li key={t}>{t}</li>)}
      </ul>
      <button className="absolute right-[3px] bottom-px h-[25px] w-[56px] rounded-full bg-linear-to-b from-[#4c66ea] to-[#24397f] text-[14.9px] font-bold text-white">Close</button>
    </div>
  );
}

function Callout() {
  return (
    <>
      <div className="absolute top-[612px] left-[188px] h-[47px] w-[239px] rounded-[10px] border-[6px] border-[#ffff33]" />
      <svg width="100" height="48" viewBox="429 612 100 48" className="absolute top-[612px] left-[429px]">
        <path d="M431.5 636L453.3 614V625.8H528V646.4H453.3V658Z" fill="#ffff33" stroke="#43598f" strokeWidth="1.5" />
      </svg>
      <div className="absolute top-[586px] left-[527px] h-[101px] w-[345px] border border-black bg-[#ffff33] pt-[7px] pl-[12px] font-['Lato'] text-[32.5px] leading-[41.5px] whitespace-nowrap text-black [-webkit-text-stroke:0.3px_black]">
        <div className="tracking-[-0.15px]">Matching two-axis</div>
        <div className="tracking-[0.28px]">link outs appear here</div>
      </div>
    </>
  );
}

export default function App() {
  return (
    <div className="relative flex h-[866px] w-[1201px] flex-col overflow-hidden bg-white font-['Liberation_Sans',sans-serif]">
      <Header />
      <div className="mr-[7px] ml-[4px] h-[5px] shrink-0 bg-[#b22d1a]" />
      <main className="flex pl-[4px]">
        <DetailPanel />
        <div className="mt-[6px] mr-[12px] ml-[12px] flex h-[768px] w-[7px] items-center bg-[#5c5c60]">
          <span className="ml-[2px] h-[31px] w-[3px] bg-white" />
        </div>
        <SummaryPanel />
      </main>
      <MatrixMenu />
      <Callout />
    </div>
  );
}
